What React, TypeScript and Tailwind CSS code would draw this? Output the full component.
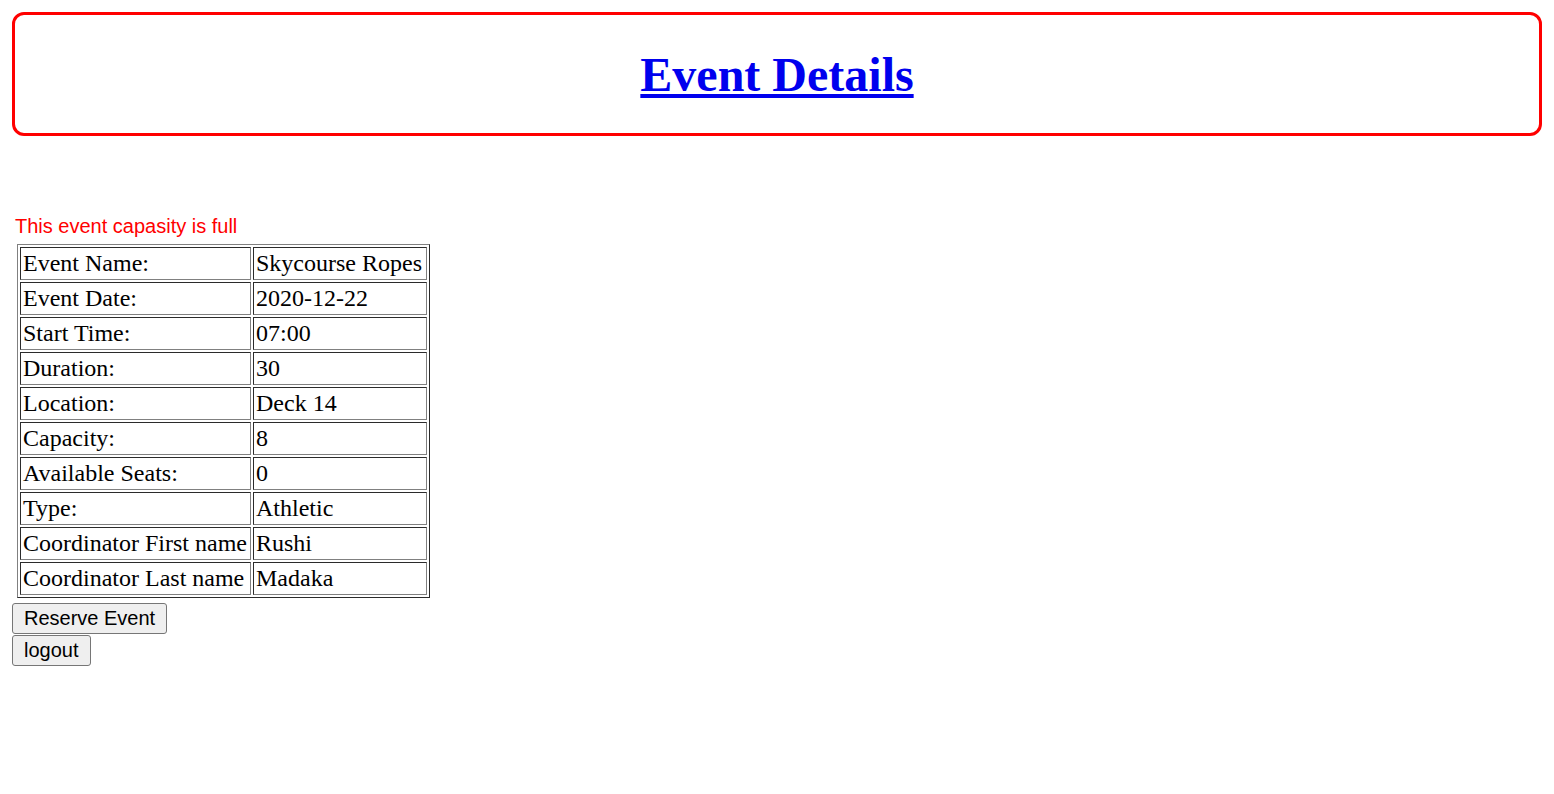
const rows: [string, string][] = [
  ["Event Name:", "Skycourse Ropes"],
  ["Event Date:", "2020-12-22"],
  ["Start Time:", "07:00"],
  ["Duration:", "30"],
  ["Location:", "Deck 14"],
  ["Capacity:", "8"],
  ["Available Seats:", "0"],
  ["Type:", "Athletic"],
  ["Coordinator First name", "Rushi"],
  ["Coordinator Last name", "Madaka"],
];

const cellBorder =
  "border border-t-[#2b2b2b] border-l-[#2b2b2b] border-r-[#808080] border-b-[#808080]";

export default function App() {
  return (
    <div className="min-h-screen bg-white text-black">
      <div className="px-[12px] pt-[12px]">
        <div className="rounded-[12px] border-[3px] border-[#ff0000] pt-[33px] pb-[32px] text-center">
          <h1 className="font-['Liberation_Serif','Times_New_Roman',serif] text-[48px] font-bold leading-[53px]">
            <a href="#" className="text-[#0000ee] underline">
              Event Details
            </a>
          </h1>
        </div>
      </div>

      <div className="px-[12px] pt-[79px]">
        <p className="ml-[3px] font-['Liberation_Sans',Arial,sans-serif] text-[20px] leading-[23px] text-[#ff0000]">
          This event capasity is full
        </p>

        <table className="mt-[6px] ml-[5px] border-separate border-spacing-[2px] border border-t-[#808080] border-l-[#808080] border-r-[#2b2b2b] border-b-[#2b2b2b] font-['Liberation_Serif','Times_New_Roman',serif] text-[24px]">
          <tbody>
            {rows.map(([label, value]) => (
              <tr key={label}>
                <td
                  className={`${cellBorder} w-[231px] whitespace-nowrap py-[1px] pr-[1px] pl-[2px] text-left align-middle leading-[29px]`}
                >
                  {label}
                </td>
                <td
                  className={`${cellBorder} w-[174px] whitespace-nowrap py-[1px] pr-[1px] pl-[2px] text-left align-middle leading-[29px]`}
                >
                  {value}
                </td>
              </tr>
            ))}
          </tbody>
        </table>

        <div className="mt-[5px] flex flex-col items-start gap-[1px]">
          <button
            type="button"
            className="rounded-[3px] border border-[#767676] bg-[#efefef] px-[11px] py-[3px] font-['Liberation_Sans',Arial,sans-serif] text-[20px] leading-[23px] text-black hover:bg-[#e5e5e5]"
          >
            Reserve Event
          </button>
          <button
            type="button"
            className="rounded-[3px] border border-[#767676] bg-[#efefef] px-[11px] py-[3px] font-['Liberation_Sans',Arial,sans-serif] text-[20px] leading-[23px] text-black hover:bg-[#e5e5e5]"
          >
            logout
          </button>
        </div>
      </div>
    </div>
  );
}
